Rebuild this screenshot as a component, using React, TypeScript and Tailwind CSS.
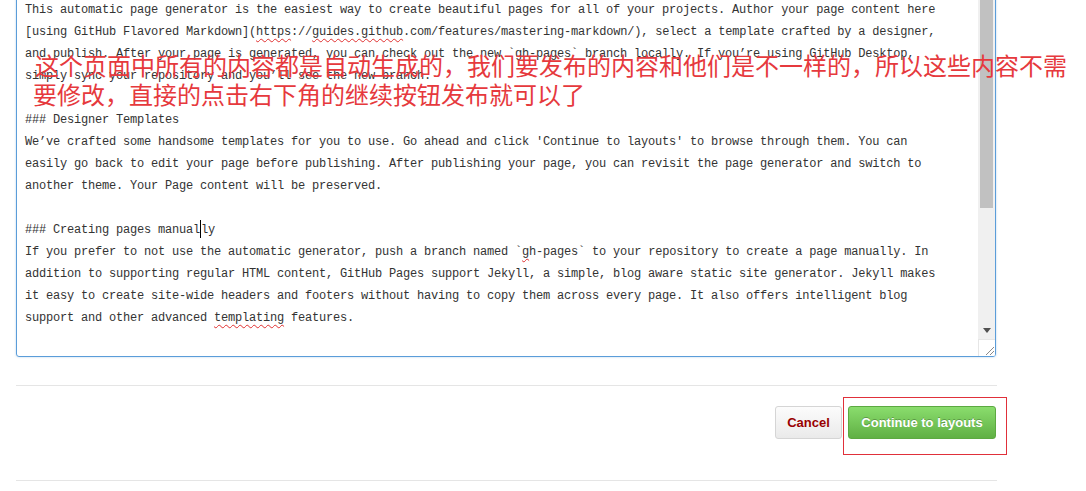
import React from "react";

const mono = { fontFamily: '"Liberation Mono", "DejaVu Sans Mono", monospace' };

const Wavy = ({ children }: { children: React.ReactNode }) => (
  <span className="underline decoration-wavy decoration-[#e03030] decoration-1 underline-offset-[3px]">{children}</span>
);

function Line({ children }: { children?: React.ReactNode }) {
  return <div className="h-[22px] leading-[22px] whitespace-pre">{children ?? " "}</div>;
}

function ScrollBar() {
  return (
    <div className="w-[17px] flex flex-col bg-[#f0f0f0] shrink-0">
      <div className="h-[227px] mx-[2px] bg-[#c1c1c1]" />
      <div className="flex-1" />
      <div className="h-[17px] flex items-center justify-center">
        <svg width="8" height="5" viewBox="0 0 8 5">
          <path d="M0 0h8L4 5z" fill="#505050" />
        </svg>
      </div>
      <div className="h-[17px] bg-white border-t border-l border-[#e6e6e6] flex items-end justify-end">
        <svg width="12" height="12" viewBox="0 0 12 12">
          <path d="M11 3L3 11M11 7L7 11" stroke="#8a8a8a" strokeWidth="1" />
        </svg>
      </div>
    </div>
  );
}

export default function App() {
  return (
    <div className="w-[1086px] h-[491px] overflow-hidden bg-white pl-4">
      <div className="relative w-[980px] flex flex-col">
        {/* textarea (scrolled) */}
        <div className="mt-[-20px] h-[377px] border border-[#5b9dd9] rounded-[3px] flex overflow-hidden shadow-[0_0_2px_rgba(91,157,217,0.5)]">
          <div className="flex-1 overflow-hidden pt-[18px] pl-[8px] text-[12px] tracking-[-0.2px] text-[#333]" style={mono}>
            <Line>This automatic page generator is the easiest way to create beautiful pages for all of your projects. Author your page content here</Line>
            <Line>
              [using GitHub Flavored Markdown](<Wavy>https</Wavy>://<Wavy>guides.github</Wavy>.com/features/mastering-markdown/), select a template crafted by a designer,
            </Line>
            <Line>and publish. After your page is generated, you can check out the new `gh-pages` branch locally. If you’re using GitHub Desktop,</Line>
            <Line>simply sync your repository and you’ll see the new branch.</Line>
            <Line />
            <Line>### Designer Templates</Line>
            <Line>We’ve crafted some handsome templates for you to use. Go ahead and click 'Continue to layouts' to browse through them. You can</Line>
            <Line>easily go back to edit your page before publishing. After publishing your page, you can revisit the page generator and switch to</Line>
            <Line>another theme. Your Page content will be preserved.</Line>
            <Line />
            <Line>
              ### Creating pages manual
              <span className="inline-block w-0 h-[18px] align-[-5px] border-l border-black" />
              ly
            </Line>
            <Line>
              If you prefer to not use the automatic generator, push a branch named `<Wavy>g</Wavy>h-pages` to your repository to create a page manually. In
            </Line>
            <Line>addition to supporting regular HTML content, GitHub Pages support Jekyll, a simple, blog aware static site generator. Jekyll makes</Line>
            <Line>it easy to create site-wide headers and footers without having to copy them across every page. It also offers intelligent blog</Line>
            <Line>
              support and other advanced <Wavy>templating</Wavy> features.
            </Line>
            <Line />
            <Line>### Authors and Contributors</Line>
          </div>
          <ScrollBar />
        </div>

        {/* red annotation */}
        <div
          className="absolute left-[18px] top-[50px] text-[24px] leading-[29px] text-[#e6393d] whitespace-nowrap pointer-events-none"
          style={{ fontFamily: '"Noto Sans CJK SC", "Noto Sans", sans-serif' }}
        >
          <div className="pl-[1px]">这个页面中所有的内容都是自动生成的，我们要发布的内容和他们是不一样的，所以这些内容不需</div>
          <div className="-ml-[1px]">要修改，直接的点击右下角的继续按钮发布就可以了</div>
        </div>
      </div>

      <div className="w-[981px] mt-[28px] border-t border-[#e5e5e5]" />

      <div className="w-[980px] mt-[20px] flex justify-end gap-[6px]" style={{ fontFamily: '"Liberation Sans", Arial, sans-serif' }}>
        <button
          type="button"
          className="h-[33px] w-[67px] rounded-[3px] border border-[#d5d5d5] bg-gradient-to-b from-[#fcfcfc] to-[#eaeaea] text-[13px] font-bold text-[#990000]"
        >
          Cancel
        </button>
        <div className="relative">
          <button
            type="button"
            className="h-[33px] w-[148px] rounded-[3px] border border-[#5ca941] bg-gradient-to-b from-[#8add6d] to-[#60b044] text-[13px] font-bold text-white [text-shadow:0_-1px_0_rgba(0,0,0,0.25)]"
          >
            Continue to layouts
          </button>
          <div className="absolute -left-[5px] -top-[9px] -right-[11px] -bottom-[16px] border border-[#e0303a] pointer-events-none" />
        </div>
      </div>

      <div className="w-[981px] mt-[41px] border-t border-[#e5e5e5]" />
    </div>
  );
}
